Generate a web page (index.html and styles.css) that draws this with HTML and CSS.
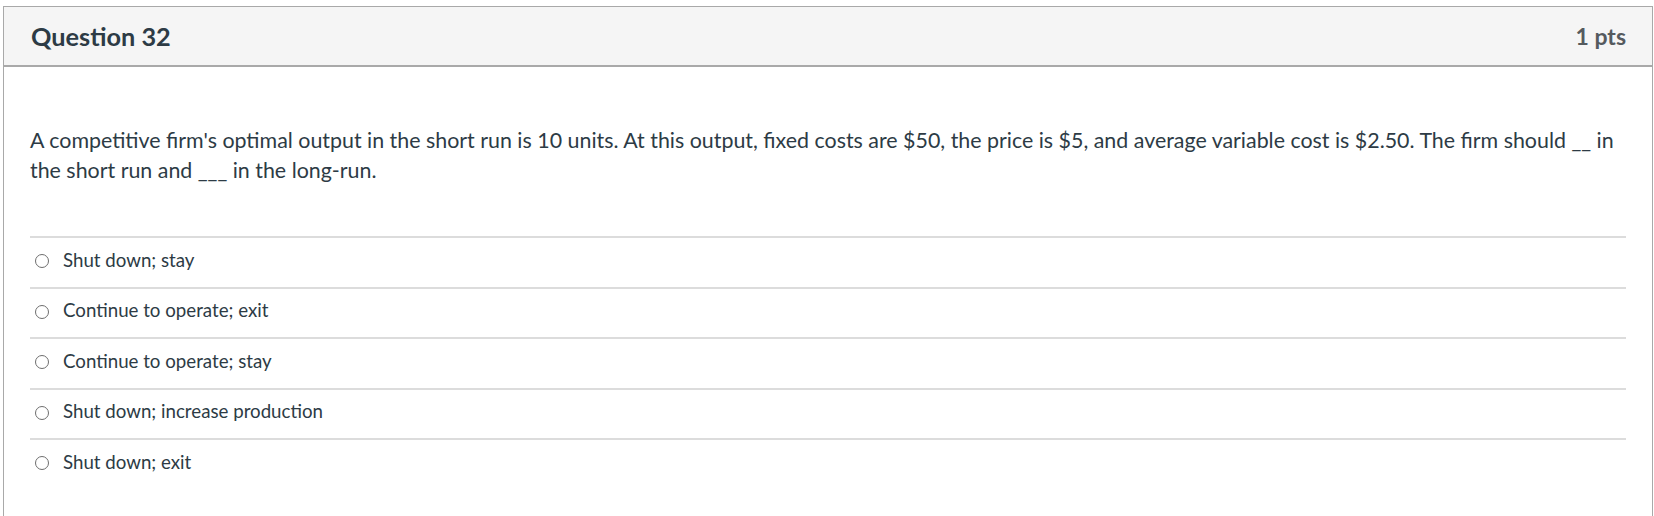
FILE: index.html
```html
<!DOCTYPE html>
<html lang="en">
<head>
<meta charset="utf-8">
<title>Question 32</title>
<link rel="stylesheet" href="styles.css">
</head>
<body>
<div class="question">
  <div class="header">
    <span class="title">Question 32</span>
    <span class="points">1 pts</span>
  </div>
  <div class="content">
    <p class="text">A competitive firm's optimal output in the short run is 10 units. At this output, fixed costs are $50, the price is $5, and average variable cost is $2.50. The firm should __ in the short run and ___ in the long-run.</p>
    <div class="answers">
      <label class="answer"><span class="radio"></span><span class="label">Shut down; stay</span></label>
      <label class="answer"><span class="radio"></span><span class="label">Continue to operate; exit</span></label>
      <label class="answer"><span class="radio"></span><span class="label">Continue to operate; stay</span></label>
      <label class="answer"><span class="radio"></span><span class="label">Shut down; increase production</span></label>
      <label class="answer"><span class="radio"></span><span class="label">Shut down; exit</span></label>
    </div>
  </div>
</div>
</body>
</html>
```
FILE: styles.css
```css
html, body {
  margin: 0;
  padding: 0;
  background: #ffffff;
}
body {
  font-family: Lato, "Noto Sans", sans-serif;
  color: #2d3b45;
  height: 516px;
  overflow: hidden;
}
.question {
  margin: 6px 1px 0 3px;
  border: 1px solid #a9a9a9;
  border-bottom: none;
  height: 520px;
}
.header {
  display: flex;
  justify-content: space-between;
  align-items: center;
  height: 58px;
  padding: 0 26px 0 27px;
  background: #f5f5f5;
  border-bottom: 2px solid #a9a9a9;
}
.title {
  font-weight: 700;
  font-size: 25.3px;
  color: #2d3b45;
}
.points {
  font-weight: 700;
  font-size: 23px;
  color: #555a5e;
}
.content {
  padding: 0 26px;
}
.text {
  margin: 0;
  padding-top: 58px;
  padding-bottom: 51px;
  font-size: 21.4px;
  line-height: 30px;
}
.answers {
  display: flex;
  flex-direction: column;
}
.answer {
  box-sizing: border-box;
  display: flex;
  align-items: center;
  gap: 14px;
  height: 50.5px;
  border-top: 2px solid #dcdcdc;
  padding: 0 0 5px 5px;
  font-size: 18.7px;
}
.radio {
  box-sizing: border-box;
  width: 14px;
  height: 14px;
  margin-top: 3px;
  border: 1px solid #6e6e6e;
  border-radius: 50%;
  background: #fff;
  flex: none;
}
```
